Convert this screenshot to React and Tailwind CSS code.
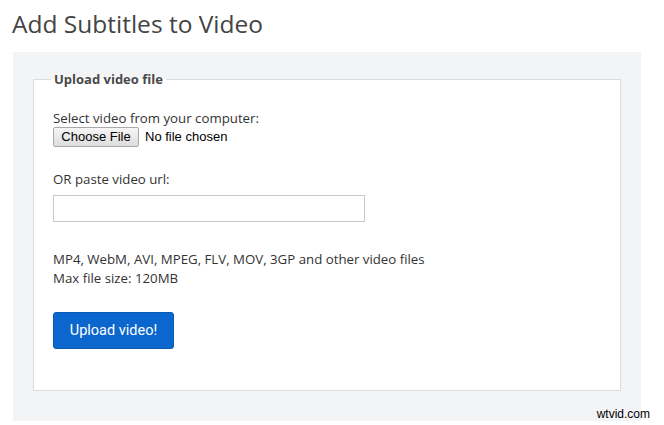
import React, { useState } from 'react';

const App = () => {
  const [url, setUrl] = useState('');

  return (
    <div className="relative w-[664px] h-[425px] overflow-hidden bg-white font-['Open_Sans',sans-serif] text-[#333]">
      <h1 className="pl-[12px] pt-[6px] h-[52px] text-[24.5px] leading-[36px] font-normal text-[#444]">
        Add Subtitles to Video
      </h1>

      <div className="ml-[13px] w-[628px] h-[369px] bg-[#f3f4f6] pt-[18px] px-[20px]">
        <fieldset className="h-[321px] border border-[#dcdcdc] bg-white pl-[19px] pt-[20px]">
          <legend className="ml-[-2px] px-[3px] text-[13px] leading-[19px] font-bold text-[#4a4a4a]">
            Upload video file
          </legend>

          <p className="text-[13.25px] leading-[19px]">Select video from your computer:</p>
          <div className="flex items-center gap-[6px] mt-[-1px] h-[20px]">
            <button className="h-[20px] w-[86px] border border-[#a9a9a9] rounded-[2px] bg-gradient-to-b from-[#f6f6f6] to-[#dddddd] font-['Liberation_Sans',sans-serif] text-[13px] leading-[18px] text-black">
              Choose File
            </button>
            <span className="font-['Liberation_Sans',sans-serif] text-[13px] text-black">No file chosen</span>
          </div>

          <p className="mt-[23px] text-[13.25px] leading-[19px]">OR paste video url:</p>
          <input
            type="text"
            value={url}
            onChange={(e) => setUrl(e.target.value)}
            className="block mt-[6px] w-[312px] h-[27px] border border-[#c8c8c8] bg-white outline-none px-2 text-[13px]"
          />

          <p className="mt-[28px] text-[13.25px] leading-[19px]">
            MP4, WebM, AVI, MPEG, FLV, MOV, 3GP and other video files
          </p>
          <p className="text-[13.25px] leading-[19px]">Max file size: 120MB</p>

          <button className="mt-[24px] w-[121px] h-[37px] rounded-[3px] bg-[#0b67cd] border border-[#0a5bb5] text-white text-[14.5px] font-['Roboto',sans-serif]">
            Upload video!
          </button>
        </fieldset>
      </div>

      {/* watermark */}
      <span className="absolute right-[14px] bottom-[2px] font-['Liberation_Sans',sans-serif] text-[12px] text-black">
        wtvid.com
      </span>
    </div>
  );
};

export default App;
